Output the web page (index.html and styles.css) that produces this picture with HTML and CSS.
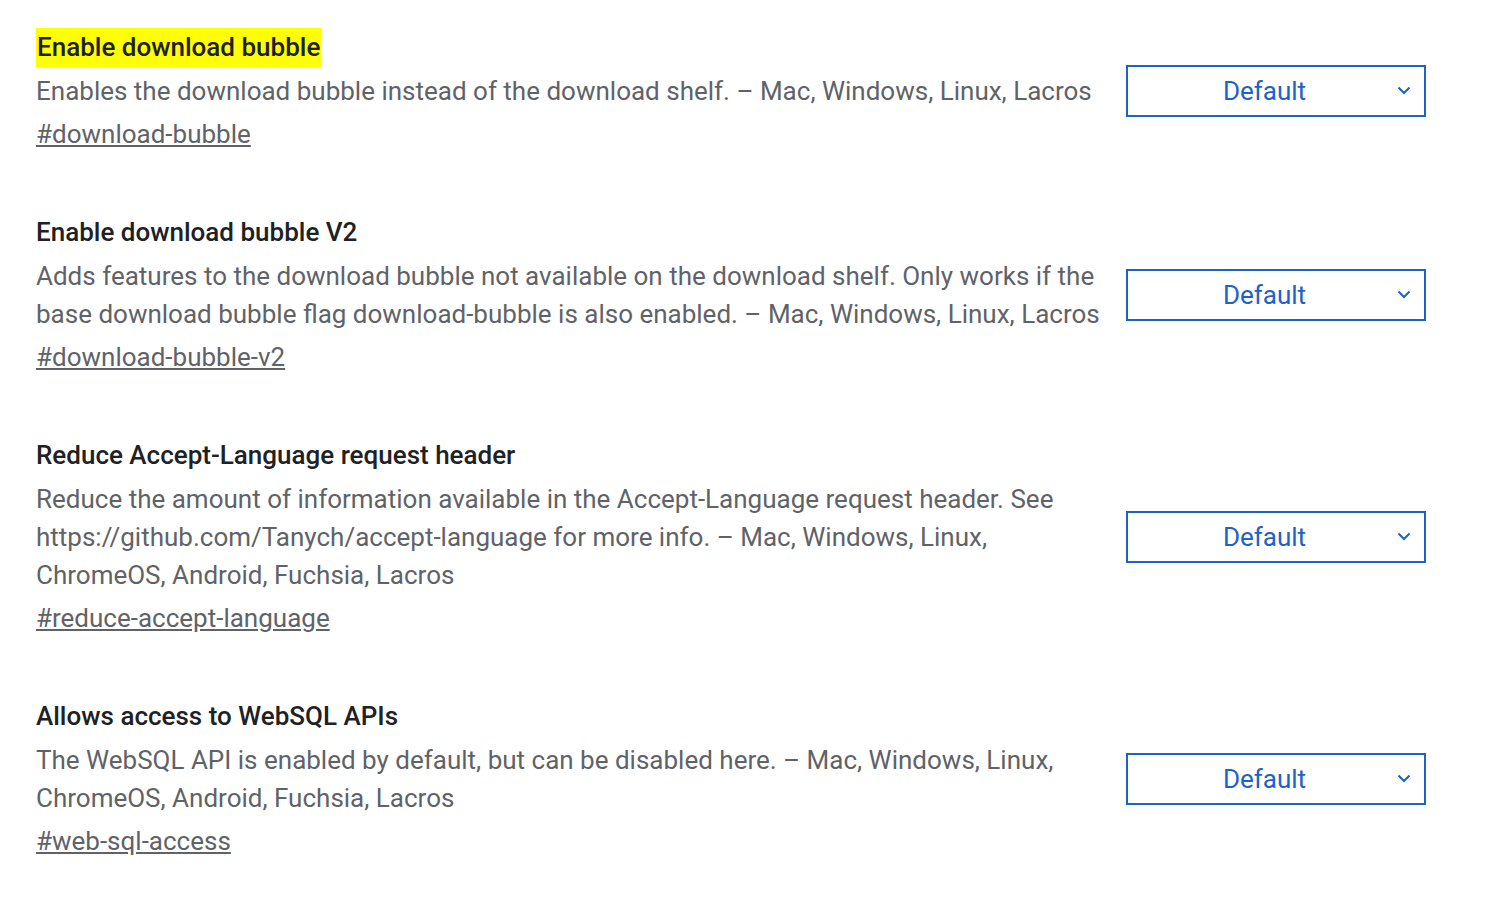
FILE: index.html
```html
<!DOCTYPE html>
<html>
	<head>
		<title>Experiments</title>
		<meta name="viewport" content="width=device-width">
		<link rel="stylesheet" href="styles.css">
	</head>
	<body>
		<div class="flags">
			<div class="experiment">
				<div class="experiment_text">
					<h2 class="experiment_name"><span class="highlight">Enable download bubble</span></h2>
					<p class="experiment_desc">Enables the download bubble instead of the download shelf. – Mac, Windows, Linux, Lacros</p>
					<a class="permalink" href="#download-bubble">#download-bubble</a>
				</div>
				<div class="select_box">
					<span class="select_label">Default</span>
					<svg class="chevron" width="14" height="9" viewBox="0 0 14 9"><path d="M1.5 1.5 L7 7 L12.5 1.5" fill="none" stroke="#1d62c6" stroke-width="2"/></svg>
				</div>
			</div>

			<div class="experiment">
				<div class="experiment_text">
					<h2 class="experiment_name">Enable download bubble V2</h2>
					<p class="experiment_desc">Adds features to the download bubble not available on the download shelf. Only works if the base download bubble flag download-bubble is also enabled. – Mac, Windows, Linux, Lacros</p>
					<a class="permalink" href="#download-bubble-v2">#download-bubble-v2</a>
				</div>
				<div class="select_box">
					<span class="select_label">Default</span>
					<svg class="chevron" width="14" height="9" viewBox="0 0 14 9"><path d="M1.5 1.5 L7 7 L12.5 1.5" fill="none" stroke="#1d62c6" stroke-width="2"/></svg>
				</div>
			</div>

			<div class="experiment">
				<div class="experiment_text">
					<h2 class="experiment_name">Reduce Accept-Language request header</h2>
					<p class="experiment_desc">Reduce the amount of information available in the Accept-Language request header. See https://github.com/Tanych/accept-language for more info. – Mac, Windows, Linux, ChromeOS, Android, Fuchsia, Lacros</p>
					<a class="permalink" href="#reduce-accept-language">#reduce-accept-language</a>
				</div>
				<div class="select_box">
					<span class="select_label">Default</span>
					<svg class="chevron" width="14" height="9" viewBox="0 0 14 9"><path d="M1.5 1.5 L7 7 L12.5 1.5" fill="none" stroke="#1d62c6" stroke-width="2"/></svg>
				</div>
			</div>

			<div class="experiment">
				<div class="experiment_text">
					<h2 class="experiment_name">Allows access to WebSQL APIs</h2>
					<p class="experiment_desc">The WebSQL API is enabled by default, but can be disabled here. – Mac, Windows, Linux, ChromeOS, Android, Fuchsia, Lacros</p>
					<a class="permalink" href="#web-sql-access">#web-sql-access</a>
				</div>
				<div class="select_box">
					<span class="select_label">Default</span>
					<svg class="chevron" width="14" height="9" viewBox="0 0 14 9"><path d="M1.5 1.5 L7 7 L12.5 1.5" fill="none" stroke="#1d62c6" stroke-width="2"/></svg>
				</div>
			</div>
		</div>
	</body>
</html>
```
FILE: styles.css
```css
body {
	margin: 0;
	background: #ffffff;
	font-family: Roboto, "Liberation Sans", sans-serif;
	font-size: 26px;
}
.flags {
	padding: 28px 0 0 36px;
	width: 1390px;
}
.experiment {
	display: flex;
	align-items: center;
	gap: 20px;
	margin-bottom: 60px;
}
.experiment_text {
	width: 1070px;
	flex-shrink: 0;
}
.experiment_name {
	margin: 0;
	font-size: 26px;
	font-weight: 500;
	line-height: 39px;
	color: #202124;
}
.highlight {
	display: inline-block;
	background: #ffff00;
	padding: 0 1px;
}
.experiment_desc {
	margin: 5px 0 0 0;
	line-height: 38px;
	color: #5f6368;
}
.permalink {
	display: inline-block;
	margin-top: 5px;
	line-height: 38px;
	color: #5f6368;
	text-decoration: underline;
}
.select_box {
	display: flex;
	align-items: center;
	gap: 12px;
	box-sizing: border-box;
	width: 300px;
	height: 52px;
	padding: 0 13px 0 16px;
	border: 2px solid #1d62c6;
	background: #ffffff;
}
.select_label {
	flex: 1;
	text-align: center;
	color: #1d62c6;
}
.chevron {
	display: block;
}
```
